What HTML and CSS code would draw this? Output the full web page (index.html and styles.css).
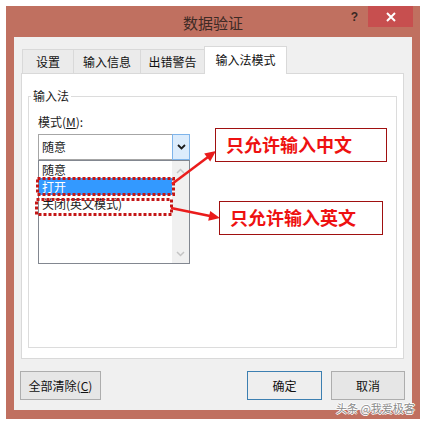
FILE: index.html
```html
<!DOCTYPE html>
<html lang="zh-CN">
<head>
<meta charset="utf-8">
<title>数据验证</title>
<link rel="stylesheet" href="styles.css">
</head>
<body>
<div class="page">
  <div class="window">
    <div class="titlebar">
      <div></div>
      <div class="title">数据验证</div>
      <div class="controls">
        <span class="help">?</span>
        <span class="close"><svg width="10" height="10" viewBox="0 0 10 10"><path d="M1 1L9 9M9 1L1 9" stroke="#fff" stroke-width="2" fill="none"/></svg></span>
      </div>
    </div>
    <div class="body">
      <div class="tabs">
        <div class="tab t1">设置</div>
        <div class="tab t2">输入信息</div>
        <div class="tab t3">出错警告</div>
        <div class="tab t4 active">输入法模式</div>
      </div>
      <div class="tabpanel">
        <fieldset class="group">
          <legend>输入法</legend>
          <div class="group-inner">
            <div class="label">模式(<u>M</u>):</div>
            <div class="combo">
              <div class="combo-value">随意</div>
              <div class="combo-btn"><svg width="9" height="6" viewBox="0 0 9 6"><path d="M1 1L4.5 4.5L8 1" stroke="#1a1a1a" stroke-width="1.8" fill="none"/></svg></div>
            </div>
            <div class="listbox">
              <div class="items">
                <div class="item">随意</div>
                <div class="item selected">打开</div>
                <div class="item">关闭(英文模式)</div>
              </div>
              <div class="scrollbar">
                <svg width="9" height="6" viewBox="0 0 9 6"><path d="M1 5L4.5 1.5L8 5" stroke="#c4c4c4" stroke-width="1.5" fill="none"/></svg>
                <svg width="9" height="6" viewBox="0 0 9 6"><path d="M1 1L4.5 4.5L8 1" stroke="#c4c4c4" stroke-width="1.5" fill="none"/></svg>
              </div>
            </div>
          </div>
        </fieldset>
      </div>
      <div class="buttons">
        <button class="btn clear">全部清除(<u>C</u>)</button>
        <div class="spacer"></div>
        <button class="btn ok">确定</button>
        <button class="btn cancel">取消</button>
      </div>
    </div>
  </div>

  <svg class="marks" width="425" height="423" viewBox="0 0 425 423">
    <rect x="37.5" y="178.5" width="136" height="16" fill="none" stroke="#c41616" stroke-width="3" stroke-dasharray="3 2"/>
    <rect x="36.5" y="199.5" width="135" height="15" fill="none" stroke="#c41616" stroke-width="3" stroke-dasharray="3 2"/>
    <line x1="172" y1="184" x2="208" y2="157" stroke="#ea1c1c" stroke-width="2.5"/>
    <polygon points="216,151 210.2,161.6 204.2,153.6" fill="#ea1c1c"/>
    <line x1="171" y1="208" x2="210" y2="216" stroke="#ea1c1c" stroke-width="2.5"/>
    <polygon points="220,218 208.2,220.7 210.2,210.9" fill="#ea1c1c"/>
  </svg>
  <div class="callout c1">只允许输入中文</div>
  <div class="callout c2">只允许输入英文</div>
  <div class="watermark">头条 @我爱极客</div>
</div>
</body>
</html>
```

FILE: styles.css
```css
* { box-sizing: border-box; }
html, body {
  margin: 0;
  padding: 0;
  background: #ffffff;
  font-family: "Noto Sans CJK SC", "Noto Sans", sans-serif;
  font-size: 12px;
  color: #1a1a1a;
}
.page {
  position: relative;
  width: 425px;
  height: 423px;
  padding: 6px;
}
.window {
  width: 414px;
  height: 413px;
  background: #c07060;
  display: flex;
  flex-direction: column;
}
.titlebar {
  height: 31px;
  display: grid;
  grid-template-columns: 1fr auto 1fr;
}
.title {
  align-self: center;
  padding-top: 3px;
  font-size: 15px;
  line-height: 20px;
  color: #3d2a25;
}
.controls {
  justify-self: end;
  display: flex;
  align-items: flex-start;
  margin-right: 7px;
}
.help {
  margin-top: 4px;
  margin-right: 10px;
  font-family: "Liberation Sans", sans-serif;
  font-weight: bold;
  font-size: 12px;
  line-height: 14px;
  color: #3a2823;
}
.close {
  width: 45px;
  height: 21px;
  background: #c74f4f;
  display: flex;
  align-items: center;
  justify-content: center;
}
.body {
  flex: 1;
  margin: 0 8px 9px;
  background: #f0f0f0;
  padding-top: 9px;
  display: flex;
  flex-direction: column;
}
.tabs {
  display: flex;
  align-items: flex-end;
  height: 28px;
  margin-left: 8px;
  margin-bottom: -1px;
  position: relative;
  z-index: 1;
}
.tab {
  height: 25px;
  border: 1px solid #d9d9d9;
  background: #ebebeb;
  margin-right: -1px;
  display: flex;
  align-items: center;
  justify-content: center;
  line-height: 16px;
  padding-top: 1px;
  color: #111;
}
.t1 { width: 52px; }
.t2 { width: 68px; }
.t3 { width: 65px; }
.t4 { width: 83px; }
.tab.active {
  height: 28px;
  background: #ffffff;
  border-bottom: none;
  padding-top: 0;
  padding-bottom: 2px;
}
.tabpanel {
  width: 383px;
  height: 286px;
  margin-left: 7px;
  background: #ffffff;
  border: 1px solid #d9d9d9;
  padding-top: 14px;
}
.group {
  margin: 0 0 0 6px;
  padding: 0;
  width: 369px;
  height: 260px;
  min-width: 0;
  border: 1px solid #dcdcdc;
}
.group legend {
  margin-left: 2px;
  padding: 0 2px;
  line-height: 16px;
  color: #1a1a1a;
}
.group-inner {
  padding-left: 9px;
}
.label {
  margin-top: 10px;
  line-height: 16px;
}
.label u { text-decoration: underline; }
.combo {
  margin-top: 4px;
  width: 152px;
  height: 26px;
  border: 1px solid #a6a6a6;
  background: #fff;
  display: flex;
}
.combo-value {
  flex: 1;
  padding-left: 3px;
  line-height: 24px;
}
.combo-btn {
  width: 18px;
  margin: -1px -1px -1px 0;
  border: 1px solid #7eb4ea;
  background: #dcecfc;
  display: flex;
  align-items: center;
  justify-content: center;
}
.listbox {
  width: 152px;
  height: 104px;
  border: 1px solid #828790;
  background: #fff;
  display: flex;
}
.items {
  flex: 1;
}
.item {
  height: 17px;
  line-height: 17px;
  padding-left: 3px;
  white-space: nowrap;
}
.item.selected {
  background: #3399ff;
  color: #ffffff;
}
.scrollbar {
  width: 17px;
  background: #f0f0f0;
  display: flex;
  flex-direction: column;
  align-items: center;
  justify-content: space-between;
  padding: 7px 0 6px;
}
.buttons {
  margin-top: 12px;
  display: flex;
  padding: 0 7px 0 6px;
}
.spacer { flex: 1; }
.btn {
  height: 29px;
  border: 1px solid #adadad;
  background: #e6e6e6;
  font-family: "Noto Sans CJK SC", "Noto Sans", sans-serif;
  font-size: 12px;
  line-height: 16px;
  color: #111;
  padding: 0;
}
.btn u { text-decoration: underline; }
.clear { width: 81px; }
.ok {
  width: 75px;
  border-color: #3c7fb1;
  background: #eeeeee;
  margin-right: 9px;
}
.cancel { width: 74px; }
.marks {
  position: absolute;
  left: 0;
  top: 0;
  pointer-events: none;
}
.callout {
  position: absolute;
  height: 34px;
  background: #ffffff;
  border: 1.5px solid #a01010;
  color: #ee1111;
  font-weight: bold;
  font-size: 18px;
  line-height: 30px;
  padding-left: 10px;
  white-space: nowrap;
}
.c1 { left: 215px; top: 128px; width: 172px; }
.c2 { left: 219px; top: 201px; width: 164px; }
.watermark {
  position: absolute;
  left: 336px;
  top: 401px;
  font-size: 11px;
  line-height: 14px;
  color: #8a8a8a;
  text-shadow: 1px 0 0 #fff, -1px 0 0 #fff, 0 1px 0 #fff, 0 -1px 0 #fff;
  white-space: nowrap;
}
```
